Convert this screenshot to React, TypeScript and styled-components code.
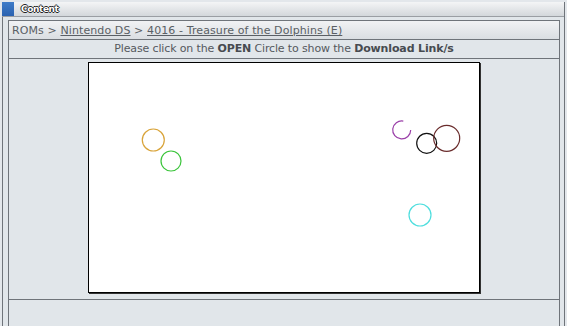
import React from "react";
import styled, { createGlobalStyle } from "styled-components";

const GlobalStyle = createGlobalStyle`
  html, body {
    margin: 0;
    padding: 0;
    background: #e3e7eb;
  }
`;

type Circle = { cx: number; cy: number; r: number; color: string };

const circles: Circle[] = [
  { cx: 64.3, cy: 77, r: 11, color: "#d9a43a" },
  { cx: 82, cy: 98, r: 10, color: "#3ac43a" },
  { cx: 337.7, cy: 80.3, r: 10, color: "#111111" },
  { cx: 357.7, cy: 75.3, r: 13, color: "#6a2c2c" },
  { cx: 331, cy: 152, r: 11, color: "#4fdede" },
];

const App = () => {
  return (
    <SPage>
      <GlobalStyle />
      <SPanel>
        <SHeader>
          <SHeaderIcon />
          <SHeaderTitle>Content</SHeaderTitle>
        </SHeader>
        <SBody>
          <SBox>
            <SCrumbs>
              ROMs &gt; <a href="#">Nintendo DS</a> &gt;{" "}
              <a href="#">4016 - Treasure of the Dolphins (E)</a>
            </SCrumbs>
            <SNotice>
              Please click on the <b>OPEN</b> Circle to show the{" "}
              <b>Download Link/s</b>
            </SNotice>
            <SCanvasRow>
              <SCanvas>
                <svg width="390" height="229" viewBox="0 0 390 229">
                  {circles.map((c, i) => (
                    <circle
                      key={i}
                      cx={c.cx}
                      cy={c.cy}
                      r={c.r}
                      fill="none"
                      stroke={c.color}
                      strokeWidth="1.2"
                    />
                  ))}
                  <path
                    d="M 314.3 58.1 A 9 9 0 1 0 321.7 67"
                    fill="none"
                    stroke="#9a3fa8"
                    strokeWidth="1.2"
                  />
                </svg>
              </SCanvas>
            </SCanvasRow>
            <SFooterRow />
          </SBox>
        </SBody>
      </SPanel>
    </SPage>
  );
};

export default App;

const SPage = styled.div`
  width: 567px;
  height: 326px;
  overflow: hidden;
  padding: 2px 2px 0 2px;
  box-sizing: border-box;
  font-family: "DejaVu Sans", Verdana, sans-serif;
`;

const SPanel = styled.div`
  width: 563px;
  height: 330px;
  border-left: 1px solid #6f747a;
  border-right: 1px solid #6f747a;
  background: #e1e6ea;
  box-sizing: border-box;
`;

const SHeader = styled.div`
  display: flex;
  align-items: center;
  height: 14px;
  margin-left: -1px;
  background: linear-gradient(#f4f5f6, #d3d7db);
  border-bottom: 1px solid #9a9ea3;
`;

const SHeaderIcon = styled.span`
  width: 12px;
  height: 14px;
  background: linear-gradient(#3f7cc8, #2a62b0);
`;

const SHeaderTitle = styled.span`
  margin-left: 7px;
  font-size: 9px;
  font-weight: bold;
  color: #fff;
  letter-spacing: -0.4px;
  text-shadow: 1px 0 0 #222, -1px 0 0 #222, 0 1px 0 #222, 0 -1px 0 #222;
`;

const SBody = styled.div`
  padding: 3px 4px 0 5px;
`;

const SBox = styled.div`
  border: 1px solid #6f747a;
  border-bottom: none;
`;

const SCrumbs = styled.div`
  height: 18px;
  line-height: 19px;
  padding-left: 3px;
  font-size: 11px;
  letter-spacing: 0.1px;
  color: #5a5f65;
  background: linear-gradient(#f1f2f4, #dadee2);
  border-bottom: 1px solid #6f747a;

  a {
    color: #5a5f65;
    text-decoration: underline;
  }
`;

const SNotice = styled.div`
  height: 18px;
  line-height: 18px;
  text-align: center;
  font-size: 11px;
  letter-spacing: -0.14px;
  color: #55595e;
  border-bottom: 1px solid #6f747a;

  b {
    color: #474b50;
  }
`;

const SCanvasRow = styled.div`
  display: flex;
  justify-content: center;
  padding: 3px 0 6px;
  border-bottom: 1px solid #6f747a;
`;

const SCanvas = styled.div`
  width: 390px;
  height: 229px;
  background: #fff;
  border: 1px solid #000;
  box-shadow: 1px 1px 0 #333;

  svg {
    display: block;
  }
`;

const SFooterRow = styled.div`
  height: 40px;
`;
